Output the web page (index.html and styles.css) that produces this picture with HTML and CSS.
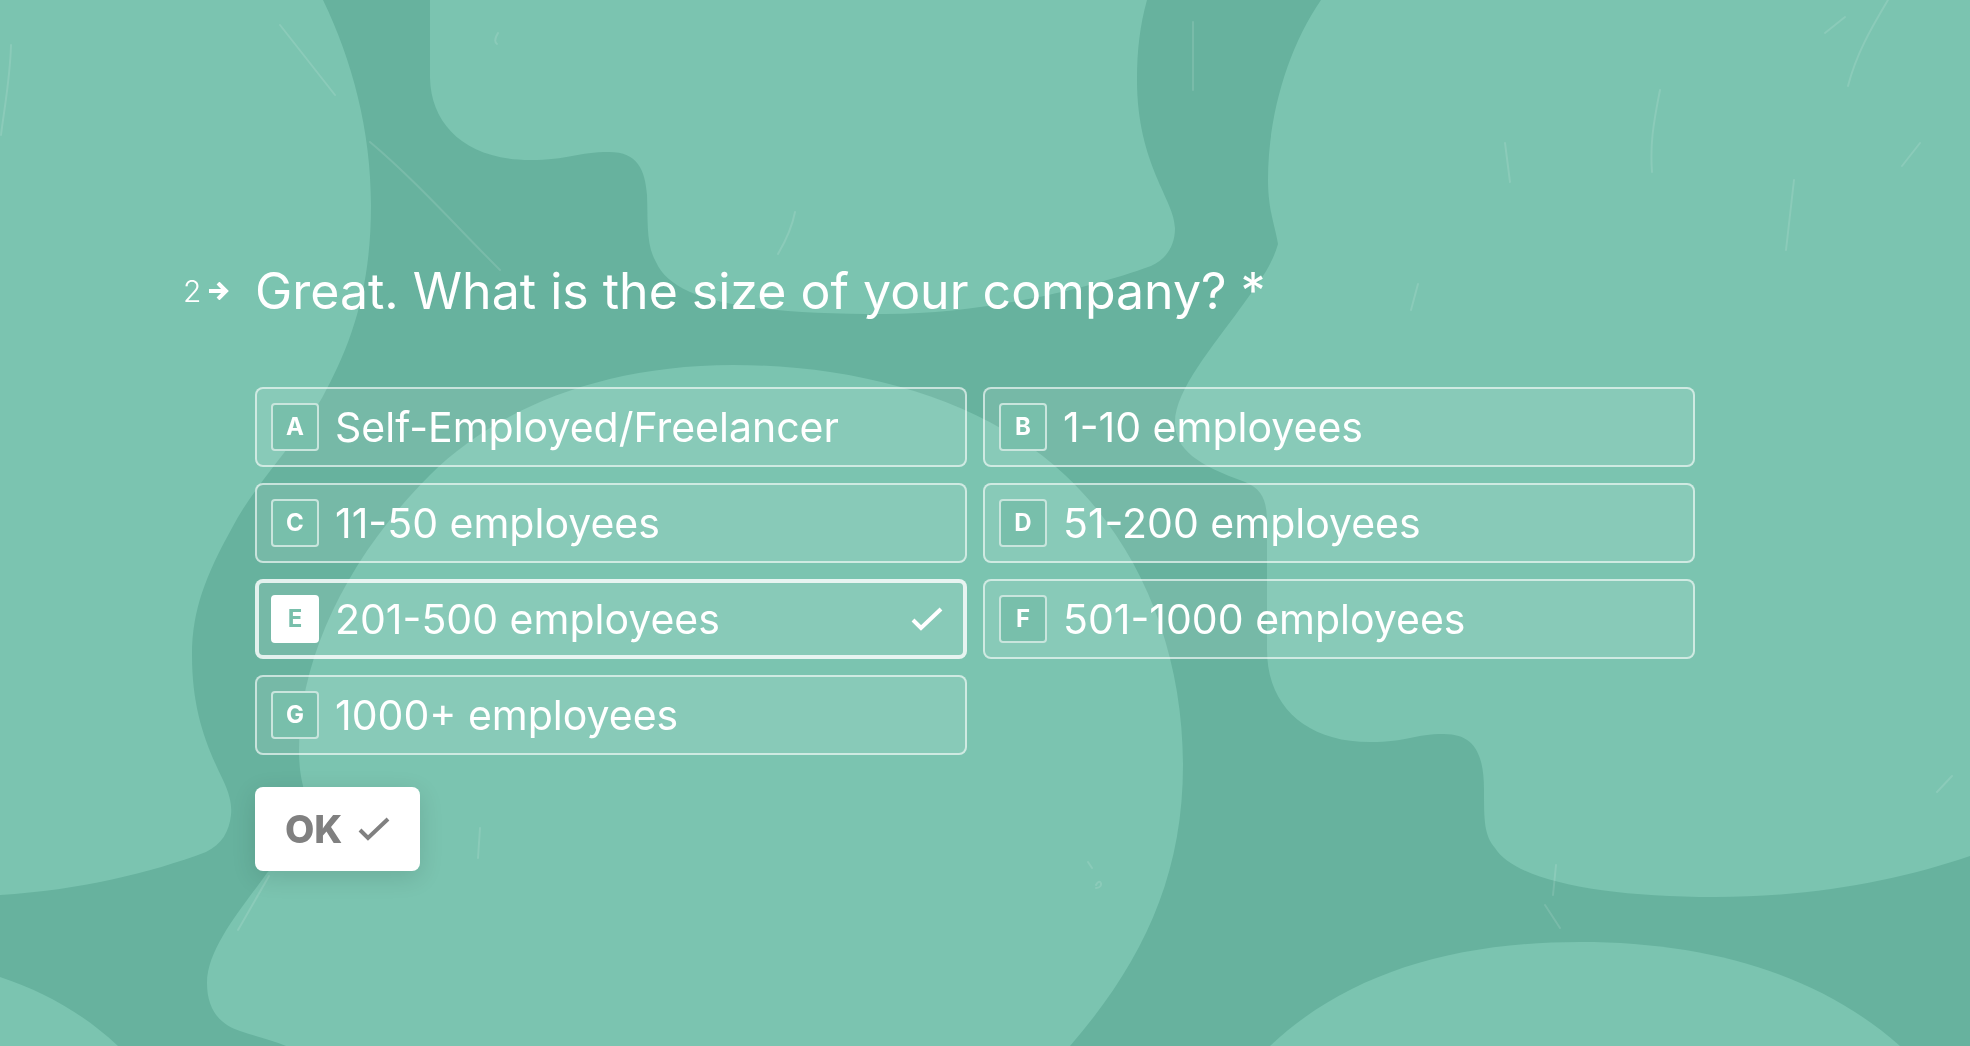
FILE: index.html
```html
<!DOCTYPE html>
<html lang="en">
<head>
    <meta charset="utf-8">
    <meta name="viewport" content="width=device-width, initial-scale=1">
    <title>Company size</title>
    <link rel="stylesheet" href="styles.css">
</head>
<body>
    <svg class="backdrop" viewBox="0 0 1970 1046" preserveAspectRatio="xMidYMid slice" aria-hidden="true">
        <g class="heads">
            <path d="M0 0H323C352 60 371 130 371 205C371 290 351 345 322 398C295 445 254 485 232 528C206 575 192 610 192 655C192 710 206 745 223 780C230 795 232 805 231 815C229 832 222 844 206 852C150 873 80 890 0 895Z"/>
            <path d="M430 0V78C431 125 466 160 530 160C568 160 578 152 609 152C638 152 645 170 647 195C648 222 646 245 656 262C672 298 735 314 885 314C985 314 1090 288 1151 266C1167 259 1175 245 1175 228C1175 200 1137 165 1137 80C1137 50 1140 25 1147 0Z"/>
            <path d="M1970 0H1321C1288 48 1268 115 1268 180C1268 210 1275 225 1278 244C1272 266 1257 285 1239 310C1214 345 1175 390 1175 422C1175 450 1198 465 1245 482C1262 489 1267 500 1267 523V650C1267 705 1305 742 1370 742C1408 742 1414 734 1444 734C1475 734 1484 755 1484 790C1484 820 1484 835 1495 848C1515 880 1600 897 1715 897C1815 897 1900 880 1970 856Z"/>
            <path d="M733 365C600 365 495 410 430 475C350 555 299 655 299 750C299 788 309 795 309 820C300 842 285 852 267 873C242 908 207 948 207 983C207 1012 222 1025 240 1031C258 1037 272 1040 286 1046H1070C1140 965 1183 880 1183 765C1183 650 1140 545 1065 475C985 400 860 365 733 365Z"/>
            <path d="M0 977C45 992 84 1014 118 1046H0Z"/>
            <path d="M1270 1046C1345 975 1450 942 1580 942C1710 942 1820 975 1900 1046Z"/>
        </g>
        <g class="scratches">
            <path d="M11 45C10 80 4 110 1 135M370 142C415 180 455 225 500 270M280 25L335 95M498 33C495 38 494 42 497 44M795 212C792 228 785 242 778 254"/>
            <path d="M1888 0C1870 30 1856 55 1848 86M1845 17L1825 33M1660 90C1653 125 1650 145 1652 172M1505 143L1510 182M1418 284L1411 310M1920 143L1902 166M1794 180L1786 250M1193 22V90"/>
            <path d="M1556 865L1553 895M1545 905L1560 928M480 828L478 858M1952 776L1937 792M269 876L238 930M1088 862L1092 868M1096 885C1100 876 1105 888 1096 888"/>
        </g>
    </svg>

    <main>
        <form class="question">
            <div class="number">
                <span>2</span>
                <svg class="arrow" viewBox="0 0 20 18" aria-hidden="true"><path d="M0 9H17M9 1L17 9L9 17"/></svg>
            </div>
            <h1 id="question-title">Great. What is the size of your company? *</h1>

            <div class="choices" role="radiogroup" aria-labelledby="question-title">
                <label class="choice">
                    <input type="radio" name="size" value="A">
                    <span class="key">A</span>
                    <span>Self-Employed/Freelancer</span>
                </label>
                <label class="choice">
                    <input type="radio" name="size" value="B">
                    <span class="key">B</span>
                    <span>1-10 employees</span>
                </label>
                <label class="choice">
                    <input type="radio" name="size" value="C">
                    <span class="key">C</span>
                    <span>11-50 employees</span>
                </label>
                <label class="choice">
                    <input type="radio" name="size" value="D">
                    <span class="key">D</span>
                    <span>51-200 employees</span>
                </label>
                <label class="choice">
                    <input type="radio" name="size" value="E" checked>
                    <span class="key">E</span>
                    <span>201-500 employees</span>
                    <svg class="tick" viewBox="0 0 32 26" aria-hidden="true"><path d="M2 14L10 22L30 3"/></svg>
                </label>
                <label class="choice">
                    <input type="radio" name="size" value="F">
                    <span class="key">F</span>
                    <span>501-1000 employees</span>
                </label>
                <label class="choice">
                    <input type="radio" name="size" value="G">
                    <span class="key">G</span>
                    <span>1000+ employees</span>
                </label>
            </div>

            <button type="submit" class="ok">
                OK
                <svg class="tick" viewBox="0 0 32 26" aria-hidden="true"><path d="M2 14L10 22L30 3"/></svg>
            </button>
        </form>
    </main>
</body>
</html>
```

FILE: styles.css
```css
* {
    box-sizing: border-box;
}

body {
    margin: 0;
    min-height: 100vh;
    font-family: Inter, "Liberation Sans", sans-serif;
    color: #fff;
    background-color: #67b29e;
}

.backdrop {
    position: fixed;
    top: 0;
    left: 0;
    width: 100%;
    height: 100%;
    z-index: -1;
}

.heads {
    fill: #7bc4b0;
}

.scratches {
    fill: none;
    stroke: #fff;
    stroke-opacity: 0.12;
    stroke-width: 2;
    stroke-linecap: round;
}

main {
    padding: 259px 92px 64px 0;
}

.question {
    display: grid;
    grid-template-columns: 72px 1fr;
    max-width: 1512px;
    margin: 0 auto;
}

.number {
    display: flex;
    align-items: center;
    gap: 8px;
    font-size: 30px;
    font-weight: 300;
    line-height: 64px;
}

.arrow {
    width: 20px;
    height: 18px;
    fill: none;
    stroke: #fff;
    stroke-width: 4;
}

h1 {
    margin: 0;
    font-size: 50px;
    font-weight: 400;
    line-height: 64px;
}

.choices {
    grid-column: 2;
    display: grid;
    grid-template-columns: 1fr 1fr;
    gap: 16px;
    margin-top: 64px;
}

.choice {
    position: relative;
    display: flex;
    align-items: center;
    gap: 16px;
    min-height: 80px;
    padding: 0 24px 0 16px;
    border-radius: 8px;
    background-color: rgba(255, 255, 255, 0.1);
    box-shadow: inset 0 0 0 2px rgba(255, 255, 255, 0.6);
    font-size: 41px;
    font-weight: 400;
    line-height: 48px;
    cursor: pointer;
}

.choice input {
    position: absolute;
    inset: 0;
    margin: 0;
    opacity: 0;
    cursor: pointer;
}

.choice:has(input:checked) {
    box-shadow: inset 0 0 0 4px rgba(255, 255, 255, 0.8);
}

.key {
    width: 48px;
    height: 48px;
    border: 2px solid rgba(255, 255, 255, 0.6);
    border-radius: 4px;
    background-color: #78bfab;
    font-size: 24px;
    font-weight: 700;
    line-height: 44px;
    text-align: center;
}

input:checked + .key {
    border-color: #fff;
    background-color: #fff;
    color: #78bfab;
}

.tick {
    width: 32px;
    height: 26px;
    fill: none;
    stroke: currentColor;
    stroke-width: 4;
}

.choice .tick {
    margin-left: auto;
}

.ok {
    grid-column: 2;
    justify-self: start;
    display: flex;
    align-items: center;
    gap: 16px;
    height: 84px;
    margin-top: 32px;
    padding: 0 30px;
    border: none;
    border-radius: 8px;
    background-color: #fff;
    box-shadow: 0 6px 24px rgba(0, 0, 0, 0.12);
    color: #808080;
    font-family: inherit;
    font-size: 38px;
    font-weight: 800;
    cursor: pointer;
}
```
